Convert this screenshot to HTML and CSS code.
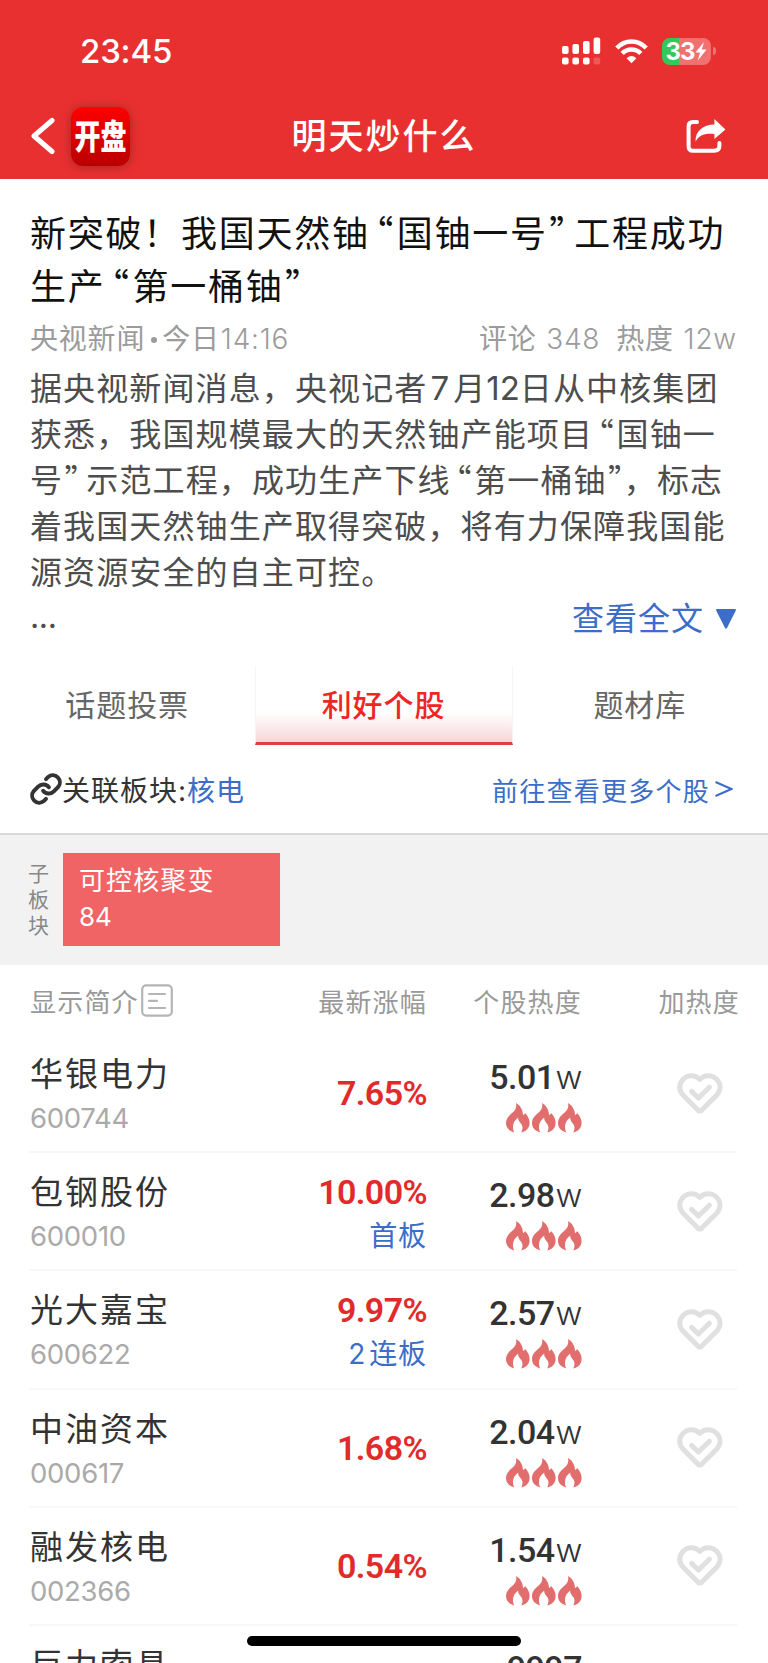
FILE: index.html
```html
<!DOCTYPE html>
<html lang="zh-CN">
<head>
    <meta charset="UTF-8">
    <meta name="viewport" content="width=device-width, initial-scale=1.0">
    <title>明天炒什么</title>
    <link rel="stylesheet" href="styles.css">
</head>
<body>

<svg class="sprite">
    <symbol id="flame" viewBox="0 0 24 30">
        <path d="M10 0C14 2 17 7 17 12C18 11.6 18.8 11 19 10C22 13 23.6 16 23.6 20C23.6 25 20 28.6 15.3 29.4C17.4 25 16.6 22.4 14.4 20C12.8 18 12 16.6 12.2 14.6C9 17 7 20 7 24C7 26 7.4 28 8.4 29.4C3 28 0 24.6 0 20C0 15.6 3 12.6 6.4 9.8C9.4 7.4 11 4 10 0Z" fill="#e26d6d"/>
    </symbol>
    <symbol id="heart" viewBox="0 0 46 42">
        <path d="M22.8 6.4C18.5 1.6 11 1.4 6.6 5.8C1.6 10.8 1.4 17.4 6.4 22.4L20.6 36.8Q22.8 39.4 25 36.8L39.4 22.4C44.2 17.4 44.2 10.8 39.2 5.8C34.6 1.4 27 1.6 22.8 6.4Z"/>
        <path d="M14.6 18.4L21.4 25L32.4 14.2"/>
    </symbol>
</svg>

<div class="screen">
    <header class="header">
        <div class="status">
            <span class="time">23:45</span>
            <div class="status-icons">
                <svg width="39" height="28" viewBox="0 0 39 28" fill="#fff">
                    <rect x="0" y="9" width="6.6" height="8" rx="2"/>
                    <rect x="10.4" y="7" width="6.6" height="10" rx="2"/>
                    <rect x="21" y="4" width="6.6" height="13" rx="2"/>
                    <rect x="31.6" y="0.4" width="6.6" height="16.6" rx="2"/>
                    <rect x="0" y="20.4" width="6.6" height="7" rx="2"/>
                    <rect x="10.4" y="20.4" width="6.6" height="7" rx="2"/>
                    <rect x="21" y="20.4" width="6.6" height="7" rx="2"/>
                    <rect x="31.6" y="20.4" width="6.6" height="7" rx="2" opacity="0.2"/>
                </svg>
                <svg class="wifi" width="33" height="25" viewBox="0 0 33 25" fill="none" stroke="#fff" stroke-width="4.6">
                    <path d="M1.8 9C10 0.3 23 0.3 31.2 9"/>
                    <path d="M7.2 14.5C12.4 9.2 20.6 9.2 25.8 14.5"/>
                    <path d="M11.6 19.2Q16.5 14.9 21.4 19.2L16.5 24.3Z" fill="#fff" stroke="none"/>
                </svg>
                <div class="battery">
                    <span>33</span>
                    <svg width="12" height="19" viewBox="0 0 12 19"><path d="M9 0L0.4 10.4H5L2.8 18.6L11.6 7.6H6.8Z" fill="#fff"/></svg>
                </div>
                <i class="battery-tip"></i>
            </div>
        </div>
        <div class="nav">
            <div class="nav-left">
                <svg width="25" height="38" viewBox="0 0 25 38" fill="none" stroke="#fff" stroke-width="5" stroke-linecap="round" stroke-linejoin="round">
                    <path d="M22 3.5L4 19L22 34.5"/>
                </svg>
                <div class="logo"><span>开盘</span></div>
            </div>
            <h1>明天炒什么</h1>
            <svg class="share" width="40" height="36" viewBox="0 0 40 36">
                <path d="M11 4H7Q2.6 4 2.6 8.4V28.2Q2.6 32.8 7 32.8H28Q33.4 32.8 33.4 28V25" fill="none" stroke="#fff" stroke-width="4" stroke-linecap="round"/>
                <path d="M28.4 1L39.4 11.4L28.4 21V16C19 15 13 17 9.6 23.6C9 13 17 6.6 28.4 6.4Z" fill="#fff"/>
            </svg>
        </div>
    </header>

    <article class="article">
        <h2>
            <span class="line">新突破！我国天然铀<q class="lq">“</q>国铀一号<q class="rq">”</q>工程成功</span>
            <span class="line">生产<q class="lq">“</q>第一桶铀<q class="rq">”</q></span>
        </h2>
        <div class="meta">
            <span class="source">央视新闻<i class="dot"></i>今日<b>14:16</b></span>
            <span class="counts"><span>评论 <b>348</b></span><span>热度 <b>12w</b></span></span>
        </div>
        <p class="content">
            <span class="line">据央视新闻消息，央视记者<b class="num wide">7</b>月<b class="num">12</b>日从中核集团</span>
            <span class="line">获悉，我国规模最大的天然铀产能项目<q class="lq">“</q>国铀一</span>
            <span class="line">号<q class="rq">”</q>示范工程，成功生产下线<q class="lq">“</q>第一桶铀<q class="rq tight">”</q>，标志</span>
            <span class="line">着我国天然铀生产取得突破，将有力保障我国能</span>
            <span class="line">源资源安全的自主可控。</span>
        </p>
        <div class="more">
            <span class="ellipsis">...</span>
            <a class="expand">查看全文
                <svg width="22" height="22" viewBox="0 0 22 22"><path d="M2 1H20Q21.4 1 20.8 2.4L12 20Q11 21.6 10 20L1.2 2.4Q0.6 1 2 1Z" fill="#3b6dc9"/></svg>
            </a>
        </div>
    </article>

    <nav class="tabs">
        <a class="tab">话题投票</a>
        <a class="tab active">利好个股</a>
        <a class="tab">题材库</a>
    </nav>

    <div class="related">
        <svg width="32" height="32" viewBox="1 1 22 22" fill="none" stroke="#333" stroke-width="2.7" stroke-linecap="round">
            <path d="M10 13.2a4.9 4.9 0 0 0 7.4.4l3-3a4.9 4.9 0 0 0-6.9-6.9l-1.5 1.5"/>
            <path d="M14 10.8a4.9 4.9 0 0 0-7.4-.4l-3 3a4.9 4.9 0 0 0 6.9 6.9l1.5-1.5"/>
        </svg>
        <span class="related-label">关联板块:<a>核电</a></span>
        <a class="related-more">前往查看更多个股<svg width="18" height="16" viewBox="0 0 18 16" fill="none" stroke="#3b6dc9" stroke-width="2"><path d="M0.5 1L16.5 8L0.5 15"/></svg></a>
    </div>

    <div class="sub">
        <span class="sub-title">子<br>板<br>块</span>
        <div class="sub-card">
            <div>可控核聚变</div>
            <div class="sub-count">84</div>
        </div>
    </div>

    <div class="row head">
        <div class="c-name">显示简介<svg width="32" height="33" viewBox="0 0 32 33" fill="none" stroke="#b5b5b5" stroke-width="2.2" stroke-linecap="round"><rect x="1.2" y="1.4" width="29.6" height="30.2" rx="4"/><path d="M8 10H24M8 16.8H16M8 24H24"/></svg></div>
        <div class="c-rate">最新涨幅</div>
        <div class="c-heat">个股热度</div>
        <div class="c-add">加热度</div>
    </div>

    <div class="row">
        <div class="c-name"><strong>华银电力</strong><small>600744</small></div>
        <div class="c-rate"><em>7.65%</em></div>
        <div class="c-heat"><div class="heat">5.01<i>w</i></div><div class="flames"><svg><use href="#flame"/></svg><svg><use href="#flame"/></svg><svg><use href="#flame"/></svg></div></div>
        <div class="c-add"><svg><use href="#heart"/></svg></div>
    </div>
    <div class="row">
        <div class="c-name"><strong>包钢股份</strong><small>600010</small></div>
        <div class="c-rate"><em>10.00%</em><span>首板</span></div>
        <div class="c-heat"><div class="heat">2.98<i>w</i></div><div class="flames"><svg><use href="#flame"/></svg><svg><use href="#flame"/></svg><svg><use href="#flame"/></svg></div></div>
        <div class="c-add"><svg><use href="#heart"/></svg></div>
    </div>
    <div class="row">
        <div class="c-name"><strong>光大嘉宝</strong><small>600622</small></div>
        <div class="c-rate"><em>9.97%</em><span><b>2</b>连板</span></div>
        <div class="c-heat"><div class="heat">2.57<i>w</i></div><div class="flames"><svg><use href="#flame"/></svg><svg><use href="#flame"/></svg><svg><use href="#flame"/></svg></div></div>
        <div class="c-add"><svg><use href="#heart"/></svg></div>
    </div>
    <div class="row">
        <div class="c-name"><strong>中油资本</strong><small>000617</small></div>
        <div class="c-rate"><em>1.68%</em></div>
        <div class="c-heat"><div class="heat">2.04<i>w</i></div><div class="flames"><svg><use href="#flame"/></svg><svg><use href="#flame"/></svg><svg><use href="#flame"/></svg></div></div>
        <div class="c-add"><svg><use href="#heart"/></svg></div>
    </div>
    <div class="row">
        <div class="c-name"><strong>融发核电</strong><small>002366</small></div>
        <div class="c-rate"><em>0.54%</em></div>
        <div class="c-heat"><div class="heat">1.54<i>w</i></div><div class="flames"><svg><use href="#flame"/></svg><svg><use href="#flame"/></svg><svg><use href="#flame"/></svg></div></div>
        <div class="c-add"><svg><use href="#heart"/></svg></div>
    </div>
    <div class="row">
        <div class="c-name"><strong>巨力索具</strong></div>
        <div class="c-rate"></div>
        <div class="c-heat"><div class="heat">9997</div></div>
        <div class="c-add"></div>
    </div>

    <div class="home-bar"></div>
</div>

</body>
</html>
```

FILE: styles.css
```css
* {
    box-sizing: border-box;
}
body {
    margin: 0;
    font-family: Inter, "Noto Sans CJK SC", sans-serif;
    background-color: #fff;
    color: #333;
}
svg {
    display: block;
    flex-shrink: 0;
}
b, i, em {
    font-style: normal;
    font-weight: inherit;
}
.sprite {
    display: none;
}
.screen {
    position: relative;
    width: 768px;
    height: 1663px;
    overflow: hidden;
}

/* header */
.header {
    height: 179px;
    background-color: #e93030;
    color: #fff;
}
.status {
    display: flex;
    justify-content: space-between;
    height: 93px;
    padding: 31px 52px 0 80px;
}
.time {
    font-size: 33px;
    font-weight: 550;
    line-height: 40px;
    letter-spacing: -0.2px;
}
.status-icons {
    display: flex;
    align-items: center;
    height: 40px;
}
.wifi {
    margin-left: 14px;
}
.battery {
    display: flex;
    align-items: center;
    justify-content: center;
    gap: 1px;
    width: 49px;
    height: 27px;
    margin-left: 14px;
    border-radius: 8px;
    background: linear-gradient(90deg, #34c759 35%, #f27070 35%);
    font-size: 24px;
    font-weight: 700;
    letter-spacing: -1px;
}
.battery-tip {
    width: 3px;
    height: 8px;
    margin-left: 2px;
    border-radius: 0 4px 4px 0;
    background-color: #f27070;
}
.nav {
    display: grid;
    grid-template-columns: 1fr auto 1fr;
    align-items: center;
    height: 86px;
    padding: 0 42px 0 30px;
}
.nav-left {
    display: flex;
    align-items: center;
    gap: 16px;
}
.logo {
    display: flex;
    align-items: center;
    justify-content: center;
    width: 59px;
    height: 59px;
    border-radius: 12px;
    background: linear-gradient(#ff0000, #b80000);
    box-shadow: 0 1px 10px rgba(90, 30, 30, 0.5);
}
.logo span {
    margin-top: -3px;
    font-family: "Noto Sans CJK SC", sans-serif;
    font-size: 26px;
    font-weight: 900;
    transform: scaleY(1.3);
}
.nav h1 {
    margin: 0 0 0 12px;
    font-size: 35px;
    font-weight: 500;
    line-height: 50px;
    letter-spacing: 2px;
}
.share {
    justify-self: end;
}

/* article */
.article {
    padding: 29px 31px 0 30px;
}
.line {
    display: block;
    white-space: nowrap;
    text-spacing-trim: space-all;
}
q {
    font-family: "Noto Sans CJK SC", sans-serif;
    line-height: 0;
    quotes: none;
}
.lq {
    margin-left: -0.35em;
    margin-right: 0.05em;
}
.rq {
    margin-left: 0.04em;
    margin-right: -0.35em;
}
.rq.tight {
    margin-right: -0.54em;
}
.article h2 {
    margin: 0;
    color: #111;
    font-size: 36px;
    font-weight: 400;
    line-height: 52.5px;
    letter-spacing: 1.75px;
}
.meta {
    display: flex;
    justify-content: space-between;
    height: 46px;
    margin-top: 3px;
    color: #9b9b9b;
    font-size: 28px;
    line-height: 46px;
    letter-spacing: 0.8px;
}
.meta b {
    margin-left: 1px;
    font-weight: 350;
}
.dot {
    display: inline-block;
    width: 6px;
    height: 6px;
    margin: 0 5px 0 6px;
    border-radius: 50%;
    background-color: #9b9b9b;
    vertical-align: 6px;
}
.counts {
    display: flex;
    gap: 16px;
}
.content {
    margin: 4px 0 0;
    color: #4d4d4d;
    font-size: 32px;
    line-height: 46px;
    letter-spacing: 1.12px;
}
.num {
    font-size: 33px;
    line-height: 0;
    letter-spacing: 0;
}
.num.wide {
    margin: 0 4px 0 3px;
}
.more {
    display: flex;
    justify-content: space-between;
    height: 46px;
    font-size: 32px;
    line-height: 46px;
}
.ellipsis {
    line-height: 42px;
    color: #4d4d4d;
    letter-spacing: -0.4px;
}
.expand {
    display: flex;
    align-items: center;
    gap: 11px;
    color: #3b6dc9;
    letter-spacing: 1px;
}

/* tabs */
.tabs {
    display: flex;
    height: 79px;
    margin-top: 24px;
}
.tab {
    flex: 1;
    padding-right: 1px;
    color: #666;
    font-size: 30px;
    line-height: 79px;
    letter-spacing: 0.9px;
    text-align: center;
}
.tab.active {
    border: 1px solid #f7f5f5;
    border-top: none;
    border-bottom: 3px solid #dd4040;
    background: linear-gradient(#fff 62%, #f6d6d6);
    color: #ee2626;
    font-weight: 500;
}

/* related sector */
.related {
    display: flex;
    align-items: center;
    height: 90px;
    padding: 0 35px 0 30px;
    border-bottom: 2px solid #dadada;
}
.related-label {
    flex: 1;
    font-size: 28px;
    letter-spacing: 1px;
}
.related-label a {
    color: #3b6dc9;
}
.related-more {
    display: flex;
    align-items: center;
    gap: 5px;
    color: #3b6dc9;
    font-size: 26px;
    letter-spacing: 1.25px;
}
.sub {
    display: flex;
    height: 130px;
    padding: 18px 28px;
    background-color: #f2f2f2;
}
.sub-title {
    width: 35px;
    padding-top: 8px;
    color: #888;
    font-size: 21px;
    line-height: 26px;
}
.sub-card {
    width: 217px;
    height: 93px;
    padding: 10px 16px;
    background-color: #f16465;
    color: #fff;
    font-size: 26px;
    line-height: 36px;
    letter-spacing: 1.1px;
}
.sub-count {
    letter-spacing: 0;
}

/* stock list */
.row {
    display: grid;
    grid-template-columns: 198px 200px 155px 155px;
    align-items: center;
    height: 118.2px;
    margin: 0 31px 0 29px;
    border-bottom: 2px solid #f7f7f7;
}
.row.head {
    height: 70px;
    border-bottom: none;
    color: #999;
    font-size: 26px;
    letter-spacing: 1.2px;
    white-space: nowrap;
}
.c-rate, .c-heat {
    text-align: right;
}
.c-name {
    align-self: start;
    padding: 17px 0 0 1px;
}
.c-heat {
    align-self: start;
    padding-top: 20px;
}
.head .c-name {
    display: flex;
    align-self: center;
    align-items: center;
    gap: 2px;
    padding-top: 0;
}
.head .c-heat {
    align-self: center;
    padding-top: 0;
}
.head .c-add {
    justify-self: end;
    margin-right: -3px;
}
.c-name strong {
    display: block;
    font-size: 33px;
    font-weight: 400;
    line-height: 44px;
    letter-spacing: 2px;
}
.c-name small {
    display: block;
    color: #aaa;
    font-size: 27.5px;
    line-height: 44px;
    letter-spacing: -0.3px;
}
.c-rate em {
    display: block;
    color: #e12b2b;
    font-family: Roboto, sans-serif;
    font-size: 34px;
    font-weight: 600;
    line-height: 44px;
    letter-spacing: -0.6px;
}
.c-rate span {
    display: block;
    margin-bottom: -5px;
    color: #3b6dc9;
    font-size: 28px;
    line-height: 44px;
    letter-spacing: 0.9px;
}
.c-rate span b {
    margin-right: 3px;
}
.heat {
    height: 44px;
    font-family: Roboto, sans-serif;
    font-size: 34px;
    font-weight: 500;
    line-height: 44px;
    letter-spacing: -0.5px;
}
.heat i {
    margin-left: 1px;
    font-family: Inter, sans-serif;
    font-size: 33px;
    font-weight: 300;
    line-height: 0;
}
.flames {
    display: flex;
    justify-content: flex-end;
    gap: 2px;
    margin-top: 4px;
}
.flames svg {
    width: 24px;
    height: 30px;
}
.row:not(.head) .c-add svg {
    width: 46px;
    height: 42px;
    margin: 1px 0 0 95px;
    fill: none;
    stroke: #e0e0e0;
    stroke-width: 5;
    stroke-linecap: round;
    stroke-linejoin: round;
}
.home-bar {
    position: absolute;
    left: 247px;
    bottom: 17px;
    width: 274px;
    height: 10px;
    border-radius: 5px;
    background-color: #000;
}
```
